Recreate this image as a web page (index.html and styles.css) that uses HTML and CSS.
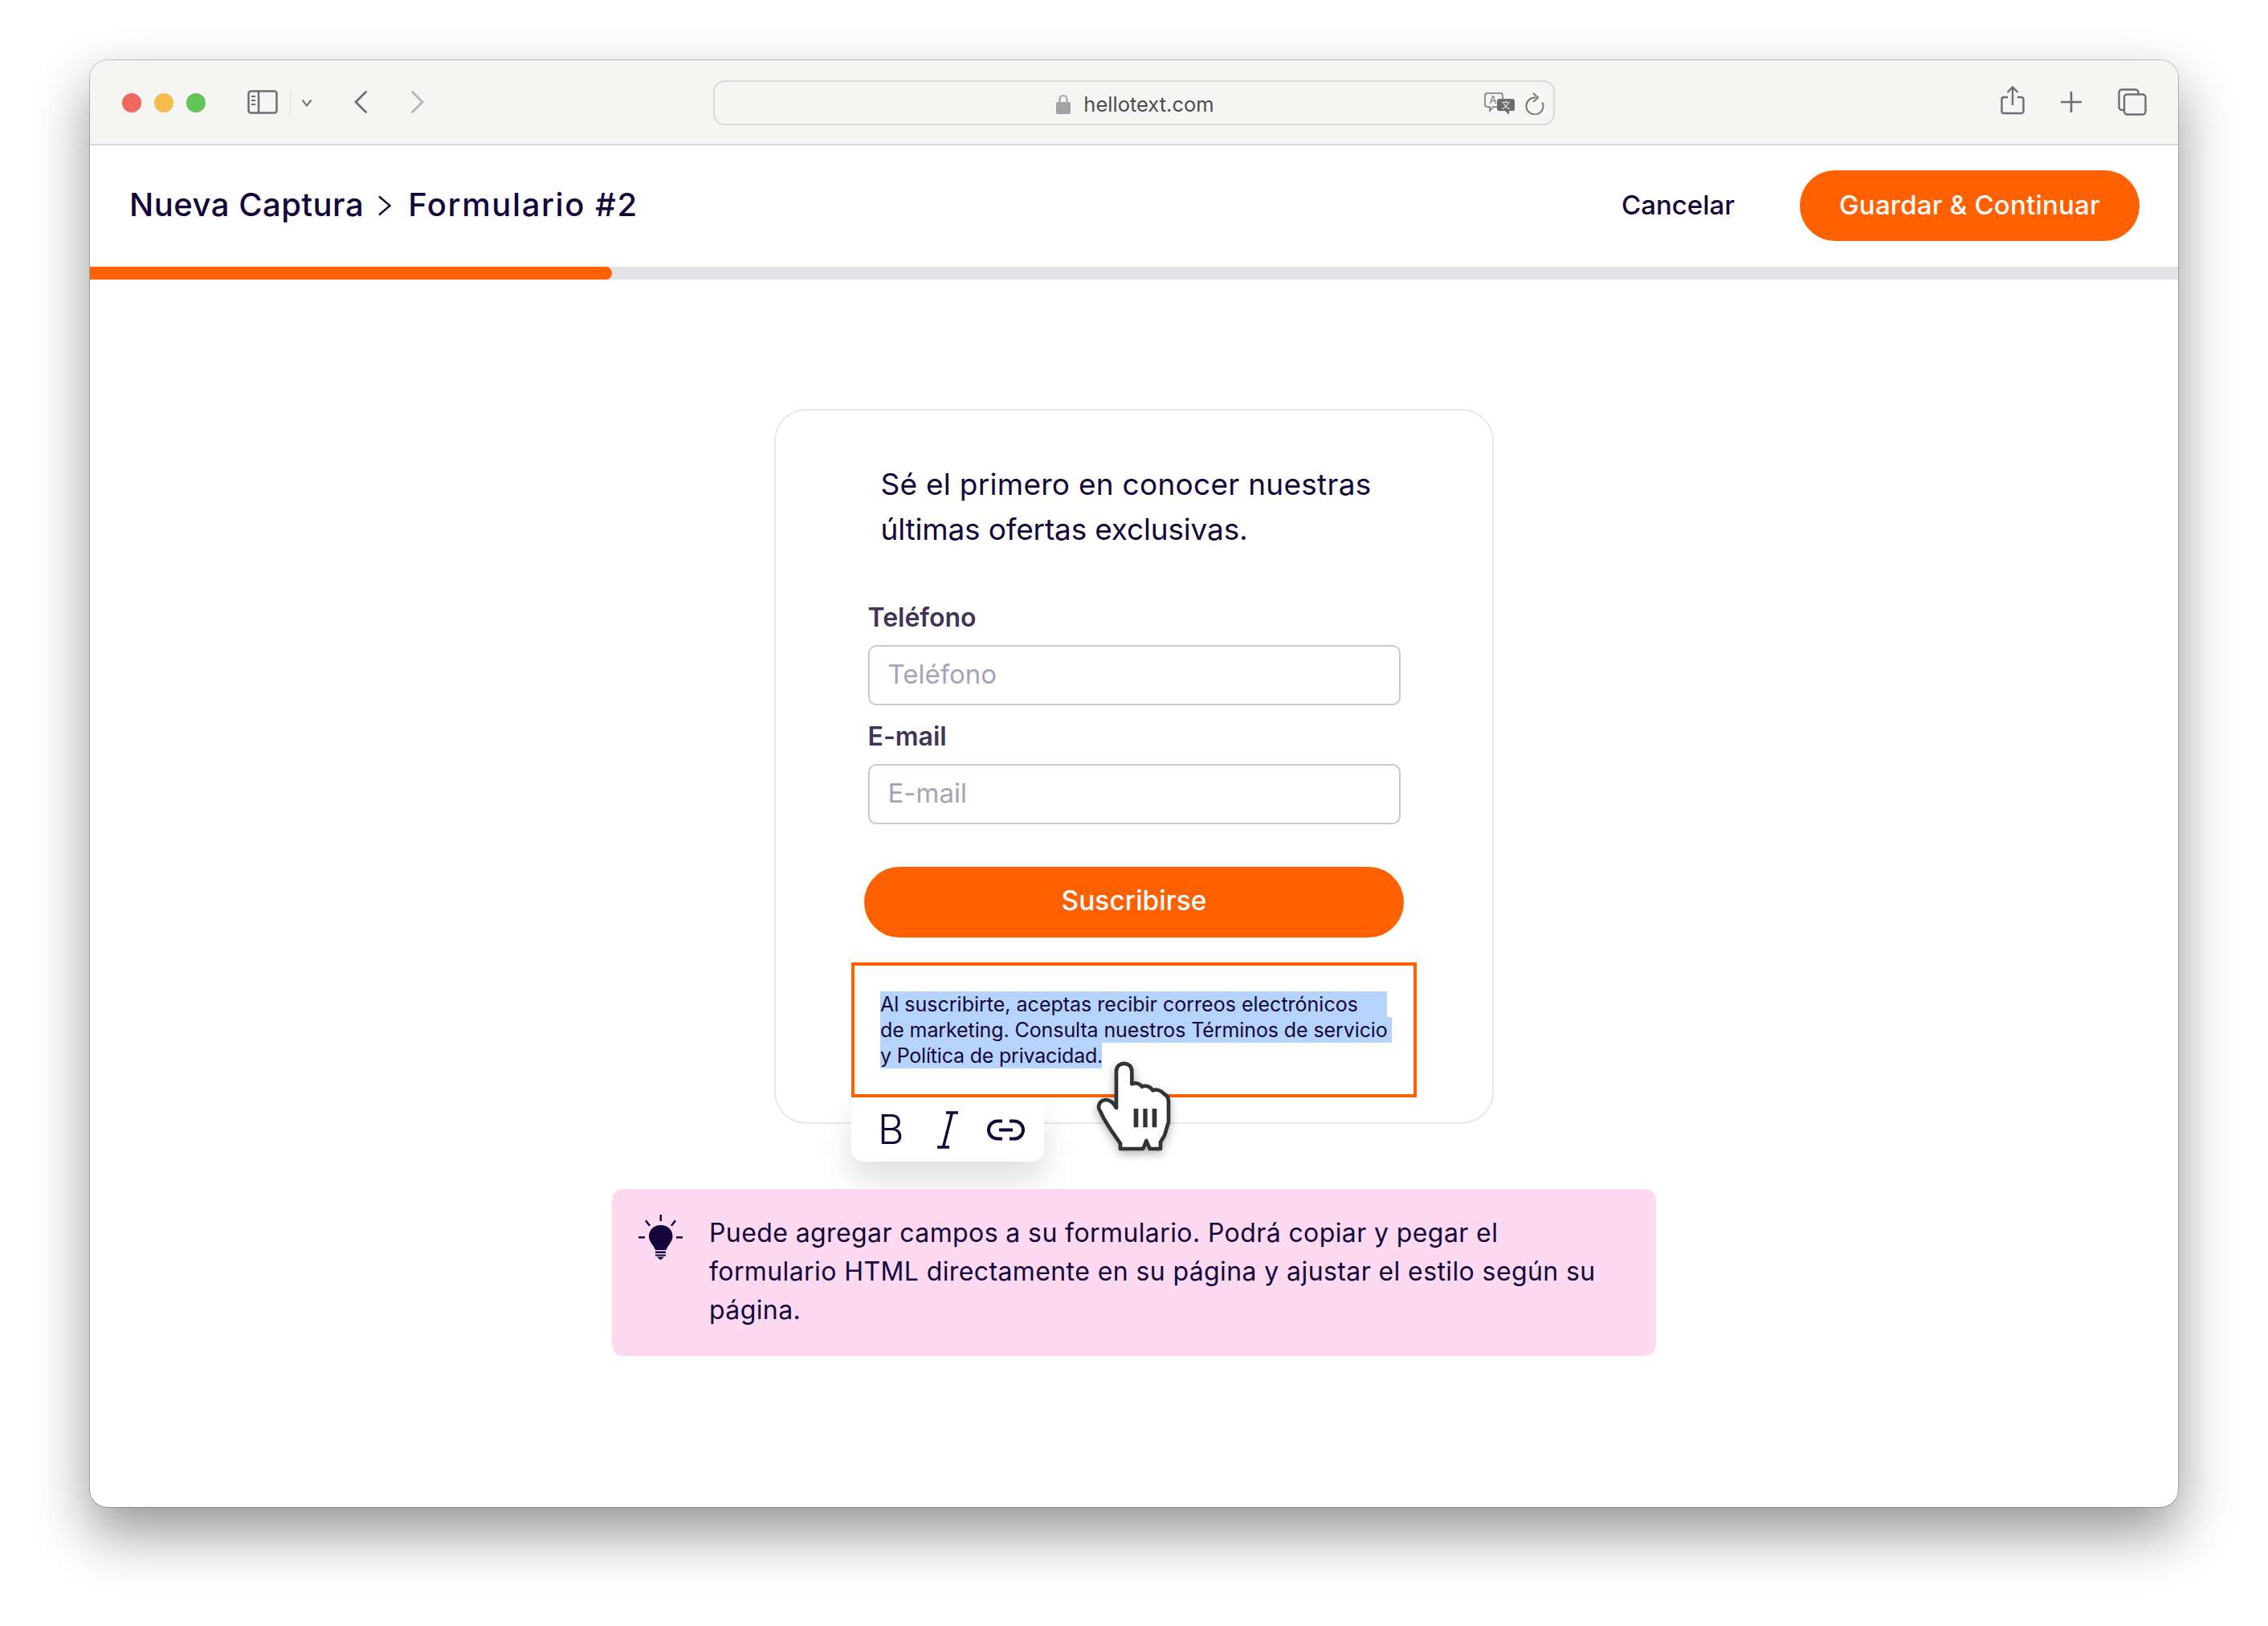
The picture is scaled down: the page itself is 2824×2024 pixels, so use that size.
FILE: index.html
```html
<!DOCTYPE html>
<html lang="es">
  <head>
    <meta charset="UTF-8" />
    <title>hellotext</title>
    <link rel="stylesheet" href="styles.css">
  </head>
  <body>
    <div class="window">
      <div class="toolbar">
        <div class="tool-left">
          <span class="light red"></span>
          <span class="light yellow"></span>
          <span class="light green"></span>
          <svg class="side-icon" viewBox="0 0 38 30" fill="none" stroke="#6e6e6e" stroke-width="2.5">
            <rect x="1.5" y="1.5" width="35" height="27" rx="3" />
            <path d="M14 1.5v27" />
            <path d="M5 8h5M5 13h5M5 18h5" stroke-width="2" />
          </svg>
          <span class="tool-sep"></span>
          <svg class="side-chev" viewBox="0 0 14 10" fill="none" stroke="#7a7a7a" stroke-width="2.2">
            <path d="M1.5 1.5 7 8.5l5.5-7" />
          </svg>
          <svg class="nav-back" viewBox="0 0 16 28" fill="none" stroke="#6e6e6e" stroke-width="2.8" stroke-linecap="round">
            <path d="M14.5 1.5 2 14l12.5 12.5" />
          </svg>
          <svg class="nav-next" viewBox="0 0 16 28" fill="none" stroke="#b4b4b4" stroke-width="2.8" stroke-linecap="round">
            <path d="M1.5 1.5 14 14 1.5 26.5" />
          </svg>
        </div>
        <div class="urlbar">
          <span></span>
          <div class="url-mid">
            <svg class="lock" viewBox="0 0 18 25" fill="none">
              <path d="M4.5 11V6.5a4.5 4.5 0 0 1 9 0V11" stroke="#a3a3a3" stroke-width="2.2" />
              <rect x="0" y="10" width="18" height="15" rx="2" fill="#a3a3a3" />
            </svg>
            <span class="url-text">hellotext.com</span>
          </div>
          <div class="url-right">
            <svg class="translate" viewBox="0 0 38 28">
              <path d="M4 1h16a3 3 0 0 1 3 3v11a3 3 0 0 1-3 3H11l-4 5v-5H4a3 3 0 0 1-3-3V4a3 3 0 0 1 3-3Z" fill="#f5f5f4" stroke="#777" stroke-width="1.6" />
              <text x="11" y="14" class="tr-a">A</text>
              <path d="M19 8h16a3 3 0 0 1 3 3v10a2 2 0 0 1-2 2h-5v5l-5-5h-7a3 3 0 0 1-3-3V11a3 3 0 0 1 3-3Z" fill="#6b6b6b" />
              <text x="27" y="20" class="tr-b">文</text>
            </svg>
            <svg class="reload" viewBox="0 0 24 28" fill="none" stroke="#777" stroke-width="2">
              <path d="M13 6.500A10.500 10.500 0 1 0 21.500 12.500" />
              <path d="M10 1l6 5.500L10 12" />
            </svg>
          </div>
        </div>
        <div class="tool-right">
          <svg class="share" viewBox="0 0 30 36" fill="none" stroke="#6e6e6e" stroke-width="2.4">
            <path d="M9 14H4a2.5 2.5 0 0 0-2.5 2.5v15A2.5 2.5 0 0 0 4 34h22a2.5 2.5 0 0 0 2.5-2.5v-15A2.5 2.5 0 0 0 26 14h-5" />
            <path d="M15 24V2M8.5 8 15 1.5 21.5 8" />
          </svg>
          <svg class="plus" viewBox="0 0 28 28" fill="none" stroke="#6e6e6e" stroke-width="2.6">
            <path d="M14 1v26M1 14h26" />
          </svg>
          <svg class="tabs" viewBox="0 0 36 34" fill="none" stroke="#6e6e6e" stroke-width="2.4">
            <path d="M7 27H5a3.5 3.5 0 0 1-3.500-3.500V5A3.500 3.500 0 0 1 5 1.500h17A3.500 3.500 0 0 1 25.500 5v2" />
            <rect x="8" y="7.500" width="26.500" height="25" rx="3.500" />
          </svg>
        </div>
      </div>

      <div class="header">
        <div class="crumbs">
          <span class="crumb-a">Nueva Captura</span>
          <svg class="crumb-sep" viewBox="0 0 18 26" fill="none" stroke="#14063a" stroke-width="2.4">
            <path d="M2 1.500 15.500 13 2 24.500" />
          </svg>
          <span class="crumb-b">Formulario #2</span>
        </div>
        <div class="actions">
          <a class="cancel">Cancelar</a>
          <a class="save">Guardar &amp; Continuar</a>
        </div>
      </div>
      <div class="progress"><div class="progress-fill"></div></div>

      <div class="main">
        <div class="card">
          <p class="headline">Sé el primero en conocer nuestras<br><span class="headline-2">últimas ofertas exclusivas.</span></p>
          <div class="field field-first">
            <label class="label">Teléfono</label>
            <input class="input" type="text" placeholder="Teléfono" />
          </div>
          <div class="field">
            <label class="label">E-mail</label>
            <input class="input" type="text" placeholder="E-mail" />
          </div>
          <button class="subscribe">Suscribirse</button>
          <div class="legal">
            <span class="sel sel-1">Al suscribirte, aceptas recibir correos electrónicos</span>
            <span class="sel sel-2">de marketing. Consulta nuestros Términos de servicio</span>
            <span class="sel sel-3">y Política de privacidad.</span>
          </div>

          <div class="popup">
            <span class="fmt-b">B</span>
            <svg class="fmt-i" viewBox="0 0 28 47" fill="none" stroke="#14063a">
              <path d="M12 2h15M1 45h15" stroke-width="3.500" />
              <path d="M19.500 2 8.500 45" stroke-width="3.400" />
            </svg>
            <svg class="fmt-link" viewBox="0 0 47 27" fill="none" stroke="#14063a" stroke-width="4">
              <path d="M19 2.500h-6a11 11 0 0 0 0 22h6M28 2.500h6a11 11 0 0 1 0 22h-6M15 13.500h17" />
            </svg>
          </div>

          <svg class="hand" viewBox="0 0 420 420">
            <path d="M165 390v-20l-35-50-25-40-20-40c-4-18 8-32 25-33 16 0 30 12 40 30V100c0-38 58-38 58 0v48c14-6 30-2 38 10 12-6 30-2 40 14 14-6 32 0 42 13 12 6 17 18 17 30v75l-15 50-15 25v25h-40l-13-30-12 30Z" fill="#fff" stroke="#333" stroke-width="14" stroke-linejoin="round" />
            <path d="M215 240h17v70h-17zM250 240h16v70h-16zM284 240h17v70h-17z" fill="#333" />
          </svg>
        </div>

        <div class="tip">
          <svg class="bulb" viewBox="0 0 56 56" fill="#14063a">
            <path d="M27.500 13c10 0 15 7 15 14 0 7-6 11-8 17H21c-2-6-8-10-8-17 0-7 5-14 14.500-14Z" />
            <path d="M21 45.500h13v2.500H21zM21 49.500h13v2H21zM23 52.500h9l-4.500 4Z" />
            <path d="M26.500 0H29v8h-2.500zM8 8l2-1.500 5 6.500-2 1.500zM47 8l-2-1.500-5 6.500 2 1.500zM0 27h8v2.500H0zM47 27h8v2.500h-8z" />
          </svg>
          <p class="tip-text">Puede agregar campos a su formulario. Podrá copiar y pegar el<br>formulario HTML directamente en su página y ajustar el estilo según su<br>página.</p>
        </div>
      </div>
    </div>
  </body>
</html>
```

FILE: styles.css
```css
* {
  box-sizing: border-box;
}
html {
  height: 2024px;
  background: #ffffff;
}
body {
  height: 2024px;
  margin: 0;
  padding: 75px 0 0 112px;
  font-family: "Inter", "Liberation Sans", sans-serif;
  color: #14063a;
}
.window {
  width: 2600px;
  height: 1801px;
  background: #ffffff;
  border-radius: 22px;
  overflow: hidden;
  box-shadow: 0 0 0 1px rgba(0, 0, 0, 0.22), 0 32px 70px rgba(0, 0, 0, 0.42);
}
.toolbar {
  height: 106px;
  padding-top: 2px;
  background: #f5f5f4;
  border-bottom: 2px solid #dcdcdc;
  display: flex;
  align-items: center;
}
.tool-left {
  width: 776px;
  padding-left: 40px;
  display: flex;
  align-items: center;
}
.light {
  width: 24px;
  height: 24px;
  border-radius: 50%;
  margin-right: 16px;
}
.red {
  background: #ee6a5f;
}
.yellow {
  background: #f5bd4f;
}
.green {
  background: #61c454;
}
.side-icon {
  width: 38px;
  height: 30px;
  margin: -2px 0 0 36px;
}
.tool-sep {
  width: 1px;
  height: 36px;
  background: #e0e0e0;
  margin-left: 15px;
}
.side-chev {
  width: 14px;
  height: 10px;
  margin-left: 13px;
}
.nav-back {
  width: 16px;
  height: 28px;
  margin: -2px 0 0 52px;
}
.nav-next {
  width: 16px;
  height: 28px;
  margin: -2px 0 0 55px;
}
.urlbar {
  width: 1048px;
  height: 56px;
  border: 2px solid #dadada;
  border-radius: 14px;
  display: grid;
  grid-template-columns: 1fr auto 1fr;
  align-items: center;
}
.url-mid {
  display: flex;
  align-items: center;
  gap: 16px;
  margin-left: 3px;
}
.lock {
  width: 18px;
  height: 25px;
  margin-top: 2px;
}
.url-text {
  font-size: 25.5px;
  padding-top: 2px;
  color: #4d4d4d;
}
.url-right {
  display: flex;
  justify-content: flex-end;
  align-items: center;
  padding-right: 11px;
  gap: 13px;
}
.translate {
  width: 38px;
  height: 28px;
  margin-top: 1px;
}
.tr-a {
  font-size: 13px;
  fill: #777;
  text-anchor: middle;
}
.tr-b {
  font-family: "Noto Sans CJK SC", sans-serif;
  font-size: 11px;
  fill: #f5f5f4;
  text-anchor: middle;
}
.reload {
  width: 24px;
  height: 28px;
  margin-top: 1px;
}
.tool-right {
  flex: 1;
  display: flex;
  justify-content: flex-end;
  align-items: center;
  padding-right: 39px;
}
.share {
  width: 30px;
  height: 36px;
  margin-top: -6px;
}
.plus {
  width: 28px;
  height: 28px;
  margin: -3px 0 0 44px;
}
.tabs {
  width: 36px;
  height: 34px;
  margin: -3px 0 0 44px;
}
.header {
  height: 151px;
  padding: 0 48px 1px 49px;
  display: flex;
  justify-content: space-between;
  align-items: center;
}
.crumbs {
  display: flex;
  align-items: center;
  padding-bottom: 3px;
  font-size: 40px;
  font-weight: 500;
}
.crumb-a {
  letter-spacing: 0.5px;
}
.crumb-b {
  letter-spacing: 1.6px;
}
.crumb-sep {
  width: 18px;
  height: 26px;
  margin: 3px 20px 0 17px;
}
.actions {
  display: flex;
  align-items: center;
}
.cancel {
  padding-bottom: 3px;
  font-size: 33px;
  font-weight: 500;
  margin-right: 81px;
}
.save {
  width: 423px;
  height: 88px;
  padding-bottom: 3px;
  border-radius: 44px;
  background: #ff6000;
  color: #ffffff;
  font-size: 33px;
  font-weight: 500;
  letter-spacing: 0.2px;
  display: flex;
  align-items: center;
  justify-content: center;
}
.progress {
  height: 16px;
  background: #e4e3e8;
}
.progress-fill {
  width: 650px;
  height: 16px;
  background: #ff6000;
  border-radius: 0 8px 8px 0;
}
.main {
  display: flex;
  flex-direction: column;
  align-items: center;
}
.card {
  position: relative;
  width: 896px;
  margin-top: 161px;
  padding: 64px 0 31px;
  border: 2px solid #e8e8ec;
  border-radius: 40px;
  display: flex;
  flex-direction: column;
  align-items: center;
}
.headline {
  width: 663px;
  margin: 0;
  padding-left: 16px;
  font-size: 37px;
  line-height: 56px;
  letter-spacing: 0.27px;
}
.headline-2 {
  letter-spacing: -0.17px;
}
.field {
  width: 663px;
  margin-top: 21px;
}
.field-first {
  margin-top: 64px;
}
.label {
  display: block;
  height: 36px;
  margin-bottom: 16px;
  font-size: 32px;
  line-height: 36px;
  font-weight: 600;
  color: #403556;
}
.input {
  display: block;
  width: 663px;
  height: 75px;
  padding: 0 23px 4px;
  border: 2px solid #c9c9d0;
  border-radius: 10px;
  outline: none;
  font-family: inherit;
  font-size: 33px;
  background: #ffffff;
}
.input::placeholder {
  color: #a5a3b5;
}
.subscribe {
  width: 672px;
  height: 88px;
  margin-top: 53px;
  padding-bottom: 5px;
  border: none;
  border-radius: 44px;
  background: #ff6000;
  color: #ffffff;
  font-family: inherit;
  font-size: 33.5px;
  font-weight: 500;
}
.legal {
  width: 704px;
  height: 168px;
  margin-top: 31px;
  padding: 32px;
  border: 4px solid #ff6000;
}
.sel {
  display: block;
  height: 32px;
  line-height: 32px;
  font-size: 25px;
  background: #b5d3fb;
  white-space: nowrap;
}
.sel-1 {
  width: 631px;
}
.sel-2 {
  width: 637px;
  letter-spacing: -0.1px;
}
.sel-3 {
  width: 276px;
  letter-spacing: -0.2px;
}
.popup {
  position: absolute;
  left: 94px;
  top: 855px;
  width: 240px;
  height: 80px;
  background: #ffffff;
  border-radius: 0 0 16px 16px;
  box-shadow: 0 24px 40px rgba(0, 0, 0, 0.12);
  display: flex;
  align-items: center;
  padding: 0 0 0 33px;
}
.fmt-b {
  font-size: 50px;
  font-weight: 300;
  line-height: 1;
  width: 30px;
}
.fmt-i {
  width: 28px;
  height: 47px;
  margin-left: 43px;
}
.fmt-link {
  width: 47px;
  height: 27px;
  margin-left: 35px;
}
.hand {
  position: absolute;
  left: 374px;
  top: 789px;
  width: 140px;
  height: 140px;
  filter: drop-shadow(0 4px 6px rgba(0, 0, 0, 0.3));
}
.tip {
  position: relative;
  width: 1300px;
  height: 208px;
  margin-top: 81px;
  padding: 31px 0 0 33px;
  background: #fddaf2;
  border-radius: 14px;
  display: flex;
  align-items: flex-start;
}
.bulb {
  width: 56px;
  height: 56px;
  margin-top: 1px;
}
.tip-text {
  margin: 0 0 0 32px;
  font-size: 32px;
  line-height: 48px;
  letter-spacing: 0.4px;
  white-space: nowrap;
}
```
